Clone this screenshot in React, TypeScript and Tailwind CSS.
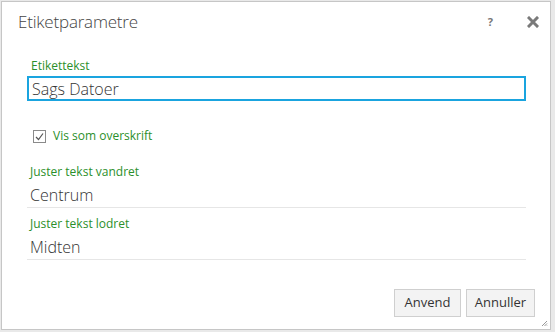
import { useState } from "react";

export default function App() {
  const [text, setText] = useState("Sags Datoer");
  const [asHeading, setAsHeading] = useState(true);

  return (
    <div className="w-[555px] h-[332px] bg-[#e9e9e9] pt-[1px] pl-[1px] font-['Open_Sans',sans-serif]">
      <div className="relative w-[550px] h-[329px] bg-white border border-[#c6c6c6] flex flex-col">
        {/* header */}
        <div className="flex items-center h-[40px] pl-[16px] pr-[11px]">
          <span className="text-[17px] font-light text-[#444] tracking-[-0.2px]">Etiketparametre</span>
          <div className="ml-auto flex items-center gap-[34px] text-[#777]">
            <span className="text-[11px] font-bold">?</span>
            <svg width="12" height="12" viewBox="0 0 12 12">
              <path d="M2 2 L10 10 M10 2 L2 10" stroke="#7a7a7a" strokeWidth="3" strokeLinecap="square" />
            </svg>
          </div>
        </div>

        {/* body */}
        <div className="flex flex-col pl-[25px] pr-[24px] pt-[16px]">
          <label htmlFor="lbl" className="text-[12px] text-[#2b8f2b] leading-[16px] pl-[4px]">
            Etikettekst
          </label>
          <input
            id="lbl"
            value={text}
            onChange={(e) => setText(e.target.value)}
            className="mt-[2px] h-[25px] border-2 border-[#1aa4df] outline-none px-[3px] text-[16px] font-light text-[#333]"
          />

          <label className="flex items-center gap-[7px] mt-[26px] pl-[6px] cursor-pointer">
            <input
              type="checkbox"
              checked={asHeading}
              onChange={() => setAsHeading(!asHeading)}
              className="hidden"
            />
            <span className="w-[13px] h-[13px] border border-[#8a8a8a] flex items-center justify-center">
              {asHeading && (
                <svg width="9" height="9" viewBox="0 0 9 9">
                  <path d="M1 5 L3.5 7.5 L8 1.5" stroke="#555" strokeWidth="1.2" fill="none" />
                </svg>
              )}
            </span>
            <span className="text-[12px] text-[#2b8f2b]">Vis som overskrift</span>
          </label>

          <div className="mt-[19px] pl-[3px] text-[12px] text-[#2b8f2b] leading-[16px]">Juster tekst vandret</div>
          <div className="h-[28px] flex items-end pl-[3px] border-b border-[#e6e6e6] text-[16px] leading-[24px] font-light text-[#333]">
            Centrum
          </div>

          <div className="mt-[8px] pl-[3px] text-[12px] text-[#2b8f2b] leading-[16px]">Juster tekst lodret</div>
          <div className="h-[28px] flex items-end pl-[3px] border-b border-[#e6e6e6] text-[16px] leading-[24px] font-light text-[#333]">
            Midten
          </div>
        </div>

        {/* footer */}
        <div className="mt-auto flex justify-end gap-[5px] pr-[15px] pb-[12px]">
          <button className="w-[67px] h-[28px] bg-[#f3f3f3] border border-[#cfcfcf] text-[13px] text-[#333]">
            Anvend
          </button>
          <button className="w-[69px] h-[28px] bg-[#f3f3f3] border border-[#cfcfcf] text-[13px] text-[#333]">
            Annuller
          </button>
        </div>

        <svg className="absolute right-[2px] bottom-[2px]" width="7" height="7" viewBox="0 0 7 7">
          <path d="M6 1 L1 6 M6 3.5 L3.5 6 M6 5.5 L5.5 6" stroke="#999" strokeWidth="1" />
        </svg>
      </div>
    </div>
  );
}
